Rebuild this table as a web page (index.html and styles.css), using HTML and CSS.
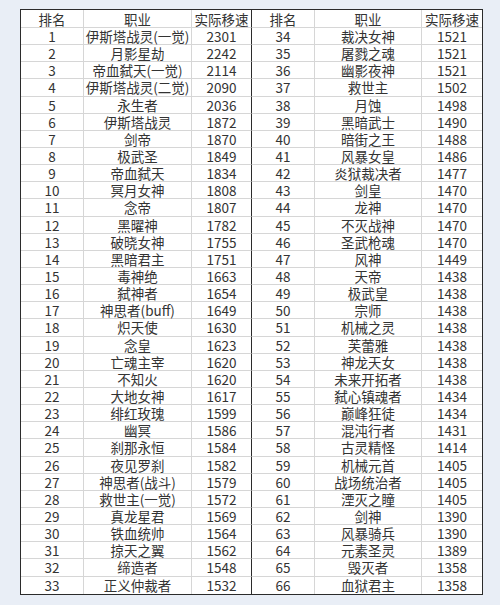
FILE: index.html
```html
<!DOCTYPE html>
<html lang="zh">
<head>
<meta charset="utf-8">
<title>实际移速排名</title>
<link rel="stylesheet" href="styles.css">
</head>
<body>
<div class="page">
<div class="sheet">
<div class="c h">排名</div><div class="c h">职业</div><div class="c h">实际移速</div><div class="c h">排名</div><div class="c h">职业</div><div class="c h">实际移速</div>
<div class="c">1</div><div class="c">伊斯塔战灵(一觉)</div><div class="c">2301</div><div class="c">34</div><div class="c">裁决女神</div><div class="c">1521</div>
<div class="c">2</div><div class="c">月影星劫</div><div class="c">2242</div><div class="c">35</div><div class="c">屠戮之魂</div><div class="c">1521</div>
<div class="c">3</div><div class="c">帝血弑天(一觉)</div><div class="c">2114</div><div class="c">36</div><div class="c">幽影夜神</div><div class="c">1521</div>
<div class="c">4</div><div class="c">伊斯塔战灵(二觉)</div><div class="c">2090</div><div class="c">37</div><div class="c">救世主</div><div class="c">1502</div>
<div class="c">5</div><div class="c">永生者</div><div class="c">2036</div><div class="c">38</div><div class="c">月蚀</div><div class="c">1498</div>
<div class="c">6</div><div class="c">伊斯塔战灵</div><div class="c">1872</div><div class="c">39</div><div class="c">黑暗武士</div><div class="c">1490</div>
<div class="c">7</div><div class="c">剑帝</div><div class="c">1870</div><div class="c">40</div><div class="c">暗街之王</div><div class="c">1488</div>
<div class="c">8</div><div class="c">极武圣</div><div class="c">1849</div><div class="c">41</div><div class="c">风暴女皇</div><div class="c">1486</div>
<div class="c">9</div><div class="c">帝血弑天</div><div class="c">1834</div><div class="c">42</div><div class="c">炎狱裁决者</div><div class="c">1477</div>
<div class="c">10</div><div class="c">冥月女神</div><div class="c">1808</div><div class="c">43</div><div class="c">剑皇</div><div class="c">1470</div>
<div class="c">11</div><div class="c">念帝</div><div class="c">1807</div><div class="c">44</div><div class="c">龙神</div><div class="c">1470</div>
<div class="c">12</div><div class="c">黑曜神</div><div class="c">1782</div><div class="c">45</div><div class="c">不灭战神</div><div class="c">1470</div>
<div class="c">13</div><div class="c">破晓女神</div><div class="c">1755</div><div class="c">46</div><div class="c">圣武枪魂</div><div class="c">1470</div>
<div class="c">14</div><div class="c">黑暗君主</div><div class="c">1751</div><div class="c">47</div><div class="c">风神</div><div class="c">1449</div>
<div class="c">15</div><div class="c">毒神绝</div><div class="c">1663</div><div class="c">48</div><div class="c">天帝</div><div class="c">1438</div>
<div class="c">16</div><div class="c">弑神者</div><div class="c">1654</div><div class="c">49</div><div class="c">极武皇</div><div class="c">1438</div>
<div class="c">17</div><div class="c">神思者(buff)</div><div class="c">1649</div><div class="c">50</div><div class="c">宗师</div><div class="c">1438</div>
<div class="c">18</div><div class="c">炽天使</div><div class="c">1630</div><div class="c">51</div><div class="c">机械之灵</div><div class="c">1438</div>
<div class="c">19</div><div class="c">念皇</div><div class="c">1623</div><div class="c">52</div><div class="c">芙蕾雅</div><div class="c">1438</div>
<div class="c">20</div><div class="c">亡魂主宰</div><div class="c">1620</div><div class="c">53</div><div class="c">神龙天女</div><div class="c">1438</div>
<div class="c">21</div><div class="c">不知火</div><div class="c">1620</div><div class="c">54</div><div class="c">未来开拓者</div><div class="c">1438</div>
<div class="c">22</div><div class="c">大地女神</div><div class="c">1617</div><div class="c">55</div><div class="c">弑心镇魂者</div><div class="c">1434</div>
<div class="c">23</div><div class="c">绯红玫瑰</div><div class="c">1599</div><div class="c">56</div><div class="c">巅峰狂徒</div><div class="c">1434</div>
<div class="c">24</div><div class="c">幽冥</div><div class="c">1586</div><div class="c">57</div><div class="c">混沌行者</div><div class="c">1431</div>
<div class="c">25</div><div class="c">刹那永恒</div><div class="c">1584</div><div class="c">58</div><div class="c">古灵精怪</div><div class="c">1414</div>
<div class="c">26</div><div class="c">夜见罗刹</div><div class="c">1582</div><div class="c">59</div><div class="c">机械元首</div><div class="c">1405</div>
<div class="c">27</div><div class="c">神思者(战斗)</div><div class="c">1579</div><div class="c">60</div><div class="c">战场统治者</div><div class="c">1405</div>
<div class="c">28</div><div class="c">救世主(一觉)</div><div class="c">1572</div><div class="c">61</div><div class="c">湮灭之瞳</div><div class="c">1405</div>
<div class="c">29</div><div class="c">真龙星君</div><div class="c">1569</div><div class="c">62</div><div class="c">剑神</div><div class="c">1390</div>
<div class="c">30</div><div class="c">铁血统帅</div><div class="c">1564</div><div class="c">63</div><div class="c">风暴骑兵</div><div class="c">1390</div>
<div class="c">31</div><div class="c">掠天之翼</div><div class="c">1562</div><div class="c">64</div><div class="c">元素圣灵</div><div class="c">1389</div>
<div class="c">32</div><div class="c">缔造者</div><div class="c">1548</div><div class="c">65</div><div class="c">毁灭者</div><div class="c">1358</div>
<div class="c">33</div><div class="c">正义仲裁者</div><div class="c">1532</div><div class="c">66</div><div class="c">血狱君主</div><div class="c">1358</div>
</div>
</div>
</body>
</html>
```
FILE: styles.css
```css
html, body {
  margin: 0;
  padding: 0;
  background: #e9eef6;
}

.page {
  padding: 9px 0 0 20px;
}

.sheet {
  display: grid;
  grid-template-columns: 63px 108px 60px 63px 107px 60px;
  grid-template-rows: 18px repeat(33, 17.15px);
  width: 463px;
  box-sizing: border-box;
  border: 1px solid #2b2b2b;
  background: #ffffff;
  font-family: "Noto Sans CJK SC", "Noto Sans", sans-serif;
  font-size: 13.5px;
  color: #333333;
}

.c {
  display: flex;
  align-items: center;
  justify-content: center;
  box-sizing: border-box;
  border-right: 1px solid #d6d6d6;
  border-bottom: 1px solid #d6d6d6;
  line-height: 16px;
  white-space: nowrap;
}

.c:nth-child(6n+3) {
  border-right: 1px solid #2b2b2b;
}

.c:nth-child(6n) {
  border-right: none;
}

.c:nth-last-child(-n+6) {
  border-bottom: none;
}
```
